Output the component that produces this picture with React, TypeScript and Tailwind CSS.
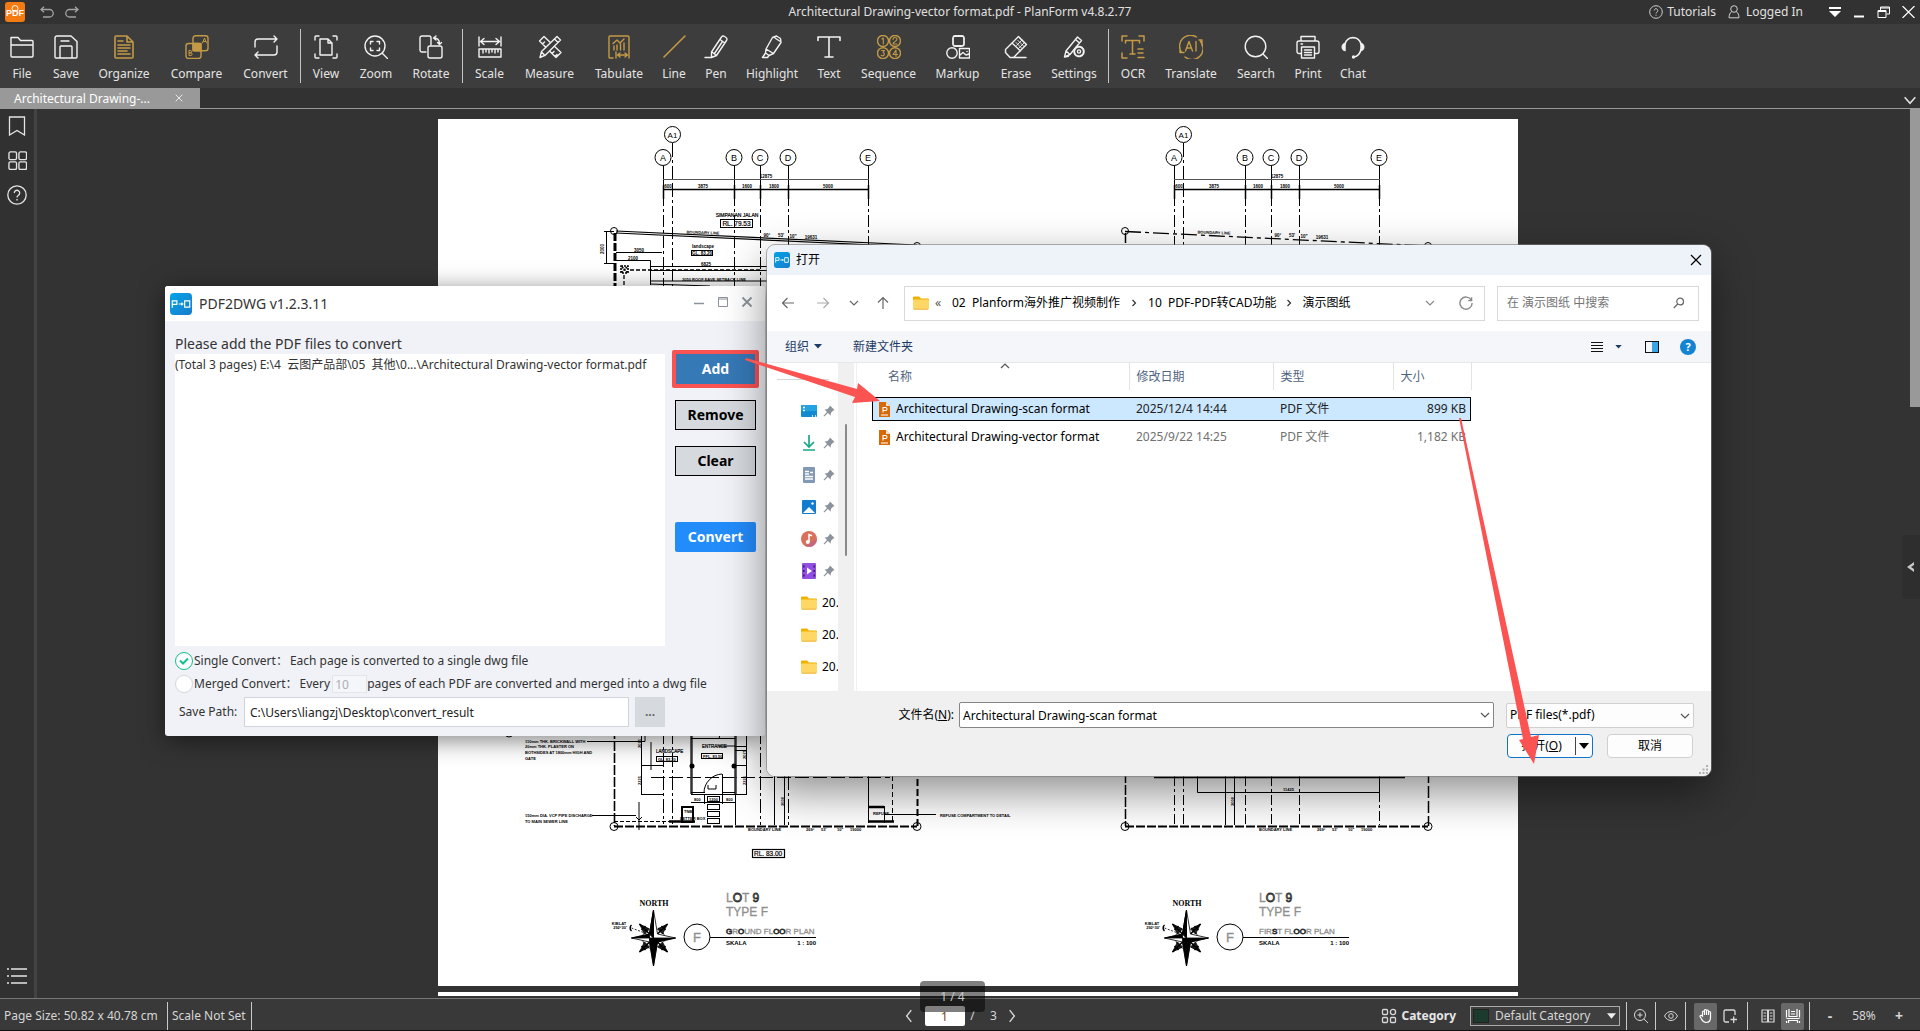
import React from "react";

type Kids = { children?: React.ReactNode };

function Icon({ children, gold = false }: Kids & { gold?: boolean }) {
  return (
    <svg
      viewBox="0 0 24 24"
      className={gold ? "size-6 text-[#c49a45]" : "size-6 text-[#f2f2f2]"}
      fill="none"
      stroke="currentColor"
      strokeWidth="1.4"
      strokeLinecap="round"
      strokeLinejoin="round"
      aria-hidden="true"
    >
      {children}
    </svg>
  );
}

type Tool = { label: string; width: string; gold?: boolean; icon: React.ReactNode };

const fileTools: Tool[] = [
  { label: "File", width: "w-11", icon: <path d="M1 21V2.5h7l2.5 3H22a1 1 0 0 1 1 1V21a1 1 0 0 1-1 1H2a1 1 0 0 1-1-1zM1 10h22" /> },
  {
    label: "Save",
    width: "w-11",
    icon: <path d="M3 1h14l6 5.5V22a1 1 0 0 1-1 1H2a1 1 0 0 1-1-1V3a2 2 0 0 1 2-2zM6 23V12a1 1 0 0 1 1-1h10a1 1 0 0 1 1 1v11M7 6h8" />,
  },
  {
    label: "Organize",
    width: "w-[72px]",
    gold: true,
    icon: <path strokeWidth="1.6" d="M4 1h11l6 6v15a1 1 0 0 1-1 1H4a1 1 0 0 1-1-1V2a1 1 0 0 1 1-1zM15 1v6h6M6 6h5M6 10h12M6 13h12M6 16h9M6 19h12" />,
  },
  {
    label: "Compare",
    width: "w-[73px]",
    gold: true,
    icon: (
      <>
        <rect x="8" y="0.8" width="15" height="15" rx="2.5" />
        <rect x="1" y="8.5" width="15" height="15" rx="2.5" />
        <rect x="8" y="8.5" width="8" height="7.3" fill="currentColor" />
        <path d="M17.5 8l2-5 2 5M18.2 6.5h2.6M4 15.500v5h1.800a1.300 1.300 0 0 0 0-2.600H4h1.500a1.200 1.200 0 0 0 0-2.400z" strokeWidth="1" />
      </>
    ),
  },
  {
    label: "Convert",
    width: "w-[65px]",
    icon: <path d="M1 12V7a3 3 0 0 1 3-3h19M20 1l3 3-3 3M23 11v6a3 3 0 0 1-3 3H1M4 17l-3 3 3 3" />,
  },
];

const viewTools: Tool[] = [
  {
    label: "View",
    width: "w-12",
    icon: <path d="M1 5V2a1 1 0 0 1 1-1h3M19 1h3a1 1 0 0 1 1 1v3M23 19v3a1 1 0 0 1-1 1h-3M5 23H2a1 1 0 0 1-1-1v-3M6 4h8l4 4v12H6zM14 4v4h4" />,
  },
  {
    label: "Zoom",
    width: "w-[52px]",
    icon: (
      <>
        <circle cx="11" cy="11" r="10" />
        <path d="M18.500 18.500L23.500 23.500M6.500 9V6.500H9M13 6.500h2.500V9M15.500 13v2.500H13M9 15.500H6.500V13" />
      </>
    ),
  },
  {
    label: "Rotate",
    width: "w-[58px]",
    icon: (
      <>
        <path d="M7 17H3a2 2 0 0 1-2-2V3a2 2 0 0 1 2-2h7a2 2 0 0 1 2 2v7M15 3c4 0 5.500 2 5.500 6M17 1l-2.500 2L17 5M18.500 7.500l2 2 2-2" />
        <rect x="9" y="11" width="14" height="12" rx="2" />
      </>
    ),
  },
];

const markupTools: Tool[] = [
  {
    label: "Scale",
    width: "w-[51px]",
    icon: <path d="M1 2v9M23 2v9M2.500 6.500h19M6 3.500l-3.500 3 3.500 3M18 3.500l3.500 3-3.500 3M1 14h22v8H1zM5 14v4M8 14v3M11 14v4M14 14v3M17 14v4M20 14v3" />,
  },
  {
    label: "Measure",
    width: "w-[69px]",
    icon: (
      <>
        <path d="M1.500 6l4.500-4.500 17 16-5 5zM4.500 9l2-2M8 12.500l2-2M14 18.500l2-2M17 21.500l2-2" />
        <path d="M19 1.500l3.500 3.500L7.500 20 2 22.500 3.500 16.500zM16.500 4l3.500 3.500M3.500 17l3.500 3.500" fill="#3d3d3d" />
      </>
    ),
  },
  {
    label: "Tabulate",
    width: "w-[70px]",
    gold: true,
    icon: <path d="M6 23H3a1 1 0 0 1-1-1V2a1 1 0 0 1 1-1h18a1 1 0 0 1 1 1v20M6 8.500l4-3.500 3 3 4-4M7 15v-4M10 15v-5M13.500 15v-6M17 15V8M9 17v6M22 17v6M10.500 20h10M13 18l-2.500 2L13 22M18 18l2.500 2-2.500 2" />,
  },
  { label: "Line", width: "w-10", gold: true, icon: <path d="M2 22L23 1" strokeWidth="1.6" /> },
  {
    label: "Pen",
    width: "w-11",
    icon: <path d="M1 22.500h6.500M7.500 22.500v-5.500L17.500 2a2 2 0 0 1 3-.5l1.500 1a2 2 0 0 1 .5 3L12.500 20.500zM16 4.500l4.800 3.500M8 17l4.500 3.500M18.500 6.500l-8 12" />,
  },
  {
    label: "Highlight",
    width: "w-[68px]",
    icon: <path d="M6 14L12.500 2.500l4-1.500 4 2.500.5 4L13.500 18.500zM6 14l-.5 4 3.500 2.500 4.500-2M5.500 18L2.500 22.500H7.500l1.500-2M15 3l4.500 3" />,
  },
  { label: "Text", width: "w-[46px]", icon: <path d="M1 5.500V2h22v3.500M12 2v20M8 22h8" strokeWidth="1.600" /> },
  {
    label: "Sequence",
    width: "w-[73px]",
    gold: true,
    icon: (
      <>
        <circle cx="6" cy="6" r="5.500" />
        <circle cx="18" cy="6" r="5.500" />
        <circle cx="6" cy="18.200" r="5.500" />
        <circle cx="18" cy="18.200" r="5.500" />
        <path d="M5 4l1.300-1v6M16 4.500a2 2 0 0 1 4 0c0 1.500-4 2.500-4 4.500h4M4.500 15.500h3L6 17.500a1.700 1.700 0 1 1-1.800 2.600M19 21.500v-6.500l-3 4.500h4.500" strokeWidth="1.100" />
      </>
    ),
  },
  {
    label: "Markup",
    width: "w-[65px]",
    icon: (
      <>
        <rect x="7" y="1" width="11" height="10" rx="2" strokeDasharray="2.200 1" strokeWidth="1.800" />
        <circle cx="6" cy="18" r="5.200" />
        <path d="M13.500 13.500h10v9.500h-10zM13.500 20.500l3.500-3 3 2.500 3-1M21 16.500h.1" />
      </>
    ),
  },
  {
    label: "Erase",
    width: "w-[52px]",
    icon: (
      <>
        <path d="M1.500 14.500L14.500 1.500 22.500 9.500 9.500 22.500H6L1.500 17.500zM8.500 8.500l8 7.500M6 22.500h16" />
        <path d="M12 7.500l6 6M14 5.500l6 6M12.500 10.500l5.500-5.500M15 13l5.500-5.500M16 3.500l5 5" strokeWidth="0.900" />
      </>
    ),
  },
  {
    label: "Settings",
    width: "w-16",
    icon: (
      <>
        <path d="M2.500 22L4 16 15.500 2l4 3.500L8 19.500zM13.500 4.500l4 3.500M4 16l4 3.500M2.500 22l4-.8" />
        <circle cx="17" cy="16.500" r="4.800" strokeWidth="2" strokeDasharray="2.600 1.200" fill="#3d3d3d" />
        <circle cx="17" cy="16.500" r="1.600" />
      </>
    ),
  },
];

const helperTools: Tool[] = [
  {
    label: "OCR",
    width: "w-[46px]",
    gold: true,
    icon: <path strokeWidth="1.500" d="M1 6V1h5M18 1h5v5M6 23H1v-5M4.500 8V5.500h14V8M11.500 5.500v13.500M9 19h5M17 14h5M17 18h5M17 22.500h6" />,
  },
  {
    label: "Translate",
    width: "w-[70px]",
    gold: true,
    icon: <path d="M2.500 17.500A11 11 0 0 1 17.500 2M21.500 6.500A11 11 0 0 1 6 22M1 13v4.500h4M23 10.500V5h-3M6.500 16L10 6.500 13.500 16M7.600 13h4.800M17 6.500V16" />,
  },
  {
    label: "Search",
    width: "w-[60px]",
    icon: (
      <>
        <circle cx="11.500" cy="11.500" r="10.300" />
        <path d="M19 19l4.500 4.500" />
      </>
    ),
  },
  {
    label: "Print",
    width: "w-11",
    icon: <path d="M5 6V1.500h14V6M5.500 18.500H3a2 2 0 0 1-2-2V8a2 2 0 0 1 2-2h18a2 2 0 0 1 2 2v8.500a2 2 0 0 1-2 2h-2.500M5.500 12h13v11h-13zM8.500 15h7M8.500 17.500h7M8.500 20h7M5 9h1.500" />,
  },
  {
    label: "Chat",
    width: "w-[46px]",
    icon: (
      <>
        <path d="M4 9a8.200 8.200 0 0 1 16 0M20 14.500c-1 4-3.500 7-7 7.500" strokeWidth="1.600" />
        <path d="M4.500 8v8C2 16 .8 14 .8 12S2 8 4.500 8zM19.500 8v8c2.500 0 3.700-2 3.700-4S22 8 19.500 8z" fill="currentColor" strokeWidth="0.500" />
        <circle cx="12.500" cy="22" r="1" fill="currentColor" />
      </>
    ),
  },
];

function ToolGroup({ tools }: { tools: Tool[] }) {
  return (
    <>
      {tools.map((t) => (
        <button key={t.label} type="button" className={`${t.width} flex shrink-0 flex-col items-center gap-[7px] pt-[11px] text-[12px] leading-4 text-[#e4e4e4]`}>
          <Icon gold={t.gold}>{t.icon}</Icon>
          <span>{t.label}</span>
        </button>
      ))}
    </>
  );
}

function ToolDivider() {
  return <span className="my-[5px] mr-px ml-[2px] w-px shrink-0 bg-[#c4c4c4]" />;
}

function TitleBar() {
  return (
    <header className="relative flex h-6 shrink-0 items-center justify-between bg-[#323232] pr-[5px] pl-[5px] text-[12px] leading-4 text-[#e0e0e0]">
      <div className="flex items-center gap-3">
        <svg viewBox="0 0 20 20" className="size-5" aria-hidden="true">
          <rect width="20" height="20" rx="3" fill="#f47a12" />
          <text x="10" y="13.500" fontSize="9" fontWeight="700" fill="#fff" textAnchor="middle" fontFamily="Liberation Sans, sans-serif">PDF</text>
          <circle cx="10" cy="6.500" r="3" fill="none" stroke="#fff" strokeWidth="0.900" />
        </svg>
        <button type="button" aria-label="Undo" className="ml-[3px]">
          <svg viewBox="0 0 14 12" className="h-3 w-[14px] fill-none stroke-[#a2a2a2]" strokeWidth="1.300">
            <path d="M4 .8L1 3.500l3 2.700M1 3.500h8.500a3.700 3.700 0 0 1 0 7.500H3" />
          </svg>
        </button>
        <button type="button" aria-label="Redo" className="-ml-px">
          <svg viewBox="0 0 14 12" className="h-3 w-[14px] fill-none stroke-[#a2a2a2]" strokeWidth="1.300">
            <path d="M10 .8l3 2.700-3 2.700M13 3.500H4.500a3.700 3.700 0 0 0 0 7.500H11" />
          </svg>
        </button>
      </div>
      <h1 className="absolute inset-x-0 mx-auto w-fit">Architectural Drawing-vector format.pdf - PlanForm v4.8.2.77</h1>
      <div className="flex items-center">
        <a href="#tutorials" className="flex items-center gap-1">
          <svg viewBox="0 0 14 14" className="size-[14px] fill-none stroke-[#cfcfcf]">
            <circle cx="7" cy="7" r="6.300" />
            <path d="M5.200 5.500a1.800 1.800 0 1 1 2.800 1.500c-.7.500-1 .8-1 1.500M7 9.800v1" />
          </svg>
          Tutorials
        </a>
        <a href="#account" className="mr-[26px] ml-3 flex items-center gap-[6px]">
          <svg viewBox="0 0 12 14" className="h-[14px] w-3 fill-none stroke-[#cfcfcf]">
            <circle cx="6" cy="4" r="3.300" />
            <path d="M3.800 6.600C2 7.500 1 10 1 12.800h10c0-2.800-1-5.300-2.800-6.200" />
          </svg>
          Logged In
        </a>
        <div className="flex items-center gap-3">
          <button type="button" aria-label="Menu">
            <svg viewBox="0 0 12 12" className="size-3 fill-white"><path d="M0 1h12v2H0zM0 5h12l-6 6z" /></svg>
          </button>
          <button type="button" aria-label="Minimize">
            <svg viewBox="0 0 12 12" className="size-3 fill-white"><path d="M1 9.500h10v2H1z" /></svg>
          </button>
          <button type="button" aria-label="Restore">
            <svg viewBox="0 0 13 12" className="h-3 w-[13px] fill-none stroke-white"><path d="M1 4.500h8v7H1zM3.500 4V1h9v7H9.500M1 5.500h8M3.500 2h9" /></svg>
          </button>
          <button type="button" aria-label="Close">
            <svg viewBox="0 0 13 12" className="h-3 w-[13px] fill-none stroke-white" strokeWidth="1.200"><path d="M.5 0l12 12M12.500 0L.5 12" /></svg>
          </button>
        </div>
      </div>
    </header>
  );
}

const axes = [
  { n: "A", x: 225 },
  { n: "B", x: 296 },
  { n: "C", x: 322 },
  { n: "D", x: 350 },
  { n: "E", x: 430 },
];

function PlanTop() {
  return (
    <g>
      <g fill="none" stroke="#000" strokeWidth="1">
        <circle cx="234.500" cy="15.500" r="8" />
        {axes.map((a) => (
          <g key={a.n}>
            <circle cx={a.x} cy="38.500" r="8" />
            <path d={`M${a.x + 0.5} 47V75`} />
            <path d={`M${a.x + 0.5} 75V590`} strokeDasharray="12 3 3 3" />
            <path d={`M${a.x + 0.5} 66v14`} strokeWidth="1.500" />
          </g>
        ))}
        <path d="M234.500 24V78" strokeDasharray="14 3 3 3" />
        <path d="M234.500 66V590" strokeDasharray="12 3 3 3" />
        <path d="M225 60.500h206" stroke="#555" />
        <path d="M225 70.500h206" strokeWidth="1.300" />
        <circle cx="176" cy="112" r="3.500" />
        <circle cx="479" cy="127" r="3.500" />
      </g>
      <g fontSize="9" textAnchor="middle">
        <text x="234.500" y="18.500" fontSize="8">A1</text>
        {axes.map((a) => (
          <text key={a.n} x={a.x} y="41.500">{a.n}</text>
        ))}
      </g>
      <g fontSize="4.500" fontWeight="700" textAnchor="middle">
        <text x="328" y="59">12875</text>
        <text x="230" y="69">600</text>
        <text x="265" y="69">3875</text>
        <text x="309" y="69">1600</text>
        <text x="336" y="69">1800</text>
        <text x="390" y="69">5000</text>
        <text x="265" y="115" fontSize="4" transform="rotate(2 265 115)">BOUNDARY LINE</text>
        <text x="329" y="118">90°</text>
        <text x="343" y="118">53'</text>
        <text x="355" y="119">10"</text>
        <text x="373" y="120">19631</text>
      </g>
    </g>
  );
}

function Compass() {
  return (
    <g>
      <text x="216" y="787" fontSize="8" fontWeight="700" textAnchor="middle" fontFamily="Liberation Serif, serif">NORTH</text>
      <g transform="translate(215.500 819)" stroke="#000" strokeWidth="0.800">
        <path d="M0-13L13-13 6-6 13 13 0 6-13 13-6 0-13-13z" fill="#fff" stroke="none" />
        <path d="M-14-14L-9-4-4-9zM14-14L9-4 4-9zM-14 14l5-10 5 5zM14 14L9 4 4 9z" fill="#222" />
        <path d="M-14-14L14 14M14-14L-14 14M-12-8L-8-12M12-8L8-12M-12 8l4 4M12 8l-4 4" fill="none" strokeWidth="1.600" />
        <circle r="11" fill="none" strokeDasharray="4 3" />
        <path d="M0-28L4-4 22 0 4 4 0 28-4 4-22 0-4-4z" fill="#fff" />
        <path d="M0-28V0L-4-4zM22 0H0L4 4zM0 28V0L4 4zM-22 0H0L-4-4zM0-28V28L-4 4V-4z" fill="#000" />
        <path d="M-22-10L-6-4" fill="none" strokeDasharray="2 1.500" />
        <path d="M-22-13a4 4 0 0 0 0 6" fill="none" strokeWidth="1.500" />
      </g>
      <text x="181" y="806" fontSize="4" fontWeight="700" textAnchor="middle">KIBLAT</text>
      <text x="182" y="810" fontSize="4" fontWeight="700" textAnchor="middle">292°30'</text>
    </g>
  );
}

function Dark({ children }: Kids) {
  return <tspan fill="#888" stroke="#333" strokeWidth="0.800">{children}</tspan>;
}

function PlanCaption({ children }: Kids) {
  return (
    <g>
      <Compass />
      <circle cx="259" cy="818" r="13" fill="none" stroke="#000" />
      <g fill="#8f8f8f" stroke="#8f8f8f" strokeWidth="0.300">
        <text x="259" y="823" fontSize="13" textAnchor="middle">F</text>
        <text x="288" y="783" fontSize="12">L<Dark>O</Dark>T <Dark>9</Dark></text>
        <text x="288" y="797" fontSize="12">TYPE F</text>
        <text x="288" y="815" fontSize="8">{children}</text>
      </g>
      <path d="M272 818.500H378" stroke="#000" />
      <g fontSize="6" fontWeight="700">
        <text x="288" y="826">SKALA</text>
        <text x="378" y="826" textAnchor="end">{"1 :  100"}</text>
      </g>
    </g>
  );
}

function Drawing() {
  return (
    <svg viewBox="0 0 1080 867" className="block w-full bg-white" fontFamily="Liberation Sans Narrow, Liberation Sans, sans-serif" role="img" aria-label="Floor plans">
      <PlanTop />
      <g transform="translate(511 0)">
        <PlanTop />
        <path d="M176 112.500L479 127" stroke="#000" strokeWidth="1.300" strokeDasharray="16 4 4 4" />
        <path d="M176.500 114V707" stroke="#000" strokeWidth="1.500" strokeDasharray="10 2" />
        <path d="M479.500 127V707" stroke="#000" strokeWidth="1.500" strokeDasharray="12 3" />
      </g>

      <g fill="none" stroke="#000">
        <path d="M178 112L479 126M178 114l301 14" strokeWidth="1.200" />
        <path d="M177 114V490" strokeWidth="3" strokeDasharray="8 2" />
        <path d="M176.500 490V707" strokeWidth="1.600" strokeDasharray="10 2" />
        <path d="M168.500 112v32M166 112.500h10M166 144.500h10M178 133.500h46M178 141.500h34.500V166M212 147.500h120M212 151.500h120" />
        <path d="M192 151h130M186 156v12" strokeDasharray="4 2" strokeWidth="1.300" />
        <path d="M183 147h7v7h-7zM184 148l5 5M189 148l-5 5" strokeDasharray="2 1" strokeWidth="1.600" />
        <path d="M212 165l60 2M212 162h120" />
        <rect x="282.500" y="100.500" width="32" height="8" />
        <rect x="253.500" y="131.500" width="21" height="5" />
      </g>
      <g fontSize="6.500" textAnchor="middle" stroke="#000" strokeWidth="0.200">
        <text x="299" y="98" fontSize="5">SIMPANAN JALAN</text>
        <text x="298.500" y="107">RL. 79.53</text>
      </g>
      <g fontSize="4.500" fontWeight="700" textAnchor="middle">
        <text x="265" y="129">landscape</text>
        <text x="264" y="136">GL. 83.20</text>
        <text x="201" y="133">3050</text>
        <text x="195" y="141">2100</text>
        <text x="268" y="147">6825</text>
        <text x="276" y="162" fontSize="4">3050 ROOF EAVE SETBACK LINE</text>
        <text x="166" y="130" transform="rotate(-90 166 130)">2000</text>
      </g>

      <g fill="none" stroke="#000" strokeWidth="1">
        <path d="M479.500 660V707" strokeWidth="2" strokeDasharray="7 3" />
        <path d="M176 707.500H479" strokeWidth="2" strokeDasharray="9 2" />
        <path d="M176 702.500H255" strokeWidth="1" strokeDasharray="4 2" />
        <circle cx="176" cy="707.500" r="4" />
        <circle cx="479" cy="707.500" r="4" />
        <path d="M149 622.500h58V611M154 696.500h44" />
        <path d="M203.500 611v65M203 646.500h22M203 675.500h22M213 623v28M201 683v28M198 698l3 3 3-3" />
        <path d="M225.500 611V705M234.500 611V705" strokeDasharray="14 3 3 3" />
        <path d="M213 658.500H452" strokeDasharray="14 4" />
        <path d="M253.500 611V675M297.500 611V675" strokeWidth="2.500" stroke="#333" />
        <path d="M253 619.500h44M253 673.500h14M284 673.500h13M253 675.500h56M253 683.500h44M297 646.500h12" />
        <path d="M284.500 655v20M284 655a19 19 0 0 0-18 19M266.500 675v10M284.500 675v10" />
        <path d="M270 666v4h8v-4M297.500 675V706" />
        <rect x="269.500" y="677.500" width="12" height="5" />
        <rect x="269.500" y="685.500" width="12" height="5" />
        <rect x="269.500" y="692.500" width="12" height="5" />
        <rect x="269.500" y="699.500" width="12" height="5" />
        <path d="M297 627.500h12M297 631.500h12M308.500 611V675M281 620a9 9 0 0 1 9-9M281 627h16" />
        <path d="M297.500 675V706M322.500 611V706M350.500 657V706" strokeDasharray="14 3 3 3" />
        <path d="M336.500 657V706M346.500 657V706M430.500 657V704M446.500 687V704" />
        <path d="M454.500 657V704" strokeDasharray="5 3" />
        <path d="M430 702.500h26M430 688h16M231 702.500h26" strokeWidth="2.500" />
        <path d="M447 695.500h51" />
        <path d="M244 688h11v15h-11z" strokeWidth="2" />
        <rect x="218.500" y="637.500" width="21" height="5" />
        <rect x="263.500" y="634.500" width="21" height="5" />
        <rect x="314.500" y="730.500" width="32" height="8" strokeWidth="1.200" />
        <circle cx="71" cy="614" r="4" />
      </g>
      <circle cx="254" cy="647" r="2.500" />
      <circle cx="296" cy="647" r="2.500" />
      <g fontSize="4" fontWeight="700">
        <text x="87" y="624">110mm THK. BRICKWALL WITH</text>
        <text x="87" y="629">20mm THK. PLASTER ON</text>
        <text x="87" y="635">BOTHSIDES AT 1800mm HIGH AND</text>
        <text x="87" y="641">GATE</text>
        <text x="87" y="698">150mm DIA. VCP PIPE DISCHARGE</text>
        <text x="87" y="704">TO MAIN SEWER LINE</text>
        <text x="502" y="698">REFUSE COMPARTMENT TO DETAIL</text>
        <text x="435" y="696">REFUSE</text>
        <text x="246" y="694">TNB</text>
        <text x="242" y="701">LETTER BOX</text>
        <text x="310" y="712">BOUNDARY LINE</text>
        <text x="368" y="712">269°</text>
        <text x="383" y="712">53'</text>
        <text x="399" y="712">10"</text>
        <text x="412" y="712">19000</text>
        <text x="256" y="682">800</text>
        <text x="271" y="682">1200</text>
        <text x="288" y="682">800</text>
        <text x="220" y="642">GL. 83.20</text>
        <text x="265" y="639">FFL. 83.50</text>
        <text x="203" y="629" transform="rotate(-90 203 629)">2075</text>
        <text x="203" y="666" transform="rotate(-90 203 666)">2225</text>
        <text x="308" y="640" transform="rotate(-90 308 640)">2075</text>
        <text x="308" y="666" transform="rotate(-90 308 666)">2225</text>
        <text x="346" y="687" transform="rotate(-90 346 687)">3000</text>
      </g>
      <g fontSize="6.500" stroke="#000" strokeWidth="0.200">
        <text x="218" y="634" fontSize="4.500">LANDSCAPE</text>
        <text x="264" y="629" fontSize="4.500">ENTRANCE</text>
        <text x="316" y="737">RL. 83.00</text>
      </g>

      <g fill="none" stroke="#000">
        <path d="M716 658.500H967" strokeWidth="1.500" />
        <path d="M687 707.500H990" strokeWidth="2" strokeDasharray="9 2" />
        <circle cx="687" cy="707.500" r="4" />
        <circle cx="990" cy="707.500" r="4" />
        <path d="M759.500 657V673.500H941.500V657M787.500 657V706M796.500 657V706" />
        <path d="M736.500 657V706M745.500 657V706M807.500 657V706M833.500 657V706M861.500 657V706M941.500 673V706" strokeDasharray="10 3 3 3" />
      </g>
      <g fontSize="4" fontWeight="700">
        <text x="845" y="672">11425</text>
        <text x="796" y="687" transform="rotate(-90 796 687)">3000</text>
        <text x="821" y="712">BOUNDARY LINE</text>
        <text x="879" y="712">269°</text>
        <text x="894" y="712">53'</text>
        <text x="910" y="712">10"</text>
        <text x="923" y="712">19000</text>
      </g>

      <PlanCaption><Dark>G</Dark>R<Dark>O</Dark>UND FL<Dark>OO</Dark>R PLAN</PlanCaption>
      <g transform="translate(533 0)">
        <PlanCaption>FIR<Dark>S</Dark>T FL<Dark>OO</Dark>R PLAN</PlanCaption>
      </g>
    </svg>
  );
}

function AppLogo({ className }: { className: string }) {
  return (
    <svg viewBox="0 0 24 24" className={className} aria-hidden="true">
      <defs>
        <linearGradient id="logo" x1="0" y1="0" x2="1" y2="1">
          <stop offset="0" stopColor="#00a4e8" />
          <stop offset="1" stopColor="#1b7ccb" />
        </linearGradient>
      </defs>
      <rect width="24" height="24" rx="4" fill="url(#logo)" />
      <path d="M2.500 16V8.500h5v4h-5M9.500 12h4.500M12.500 10.500L14 12l-1.500 1.500M16 8.500h5.500v7H16z" fill="none" stroke="#fff" strokeWidth="1.300" />
    </svg>
  );
}

function RadioTick({ id, checked, children }: Kids & { id: string; checked?: boolean }) {
  return (
    <span className="flex items-center">
      <span className="relative mr-px grid size-[18px] place-items-center">
        <input
          id={id}
          type="radio"
          name="mode"
          defaultChecked={checked}
          className="size-[18px] appearance-none rounded-full border border-[#d4d7dd] bg-white checked:border-[#12c08a]"
        />
        {checked && (
          <svg viewBox="0 0 12 12" className="pointer-events-none absolute size-3 fill-none stroke-[#12c08a]" strokeWidth="2">
            <path d="M2 5.500l3 3 5-5" />
          </svg>
        )}
      </span>
      <label htmlFor={id}>{children}</label>
    </span>
  );
}

function ConvertWindow() {
  const sideButton = "h-[30px] border border-black bg-[#d6dade] text-[14px] font-bold text-black";
  return (
    <section className="absolute top-[286px] left-[165px] flex h-[450px] w-[600px] flex-col rounded-[3px] bg-[#f0f2f7] text-[12px] leading-4 text-[#333] shadow-[0_4px_24px_rgba(0,0,0,0.5)]">
      <header className="flex h-[35px] shrink-0 items-center rounded-t-[3px] bg-white pr-3 pl-[5px]">
        <AppLogo className="size-[22px]" />
        <h2 className="ml-[7px] grow pt-px text-[14px]">PDF2DWG v1.2.3.11</h2>
        <div className="flex items-center gap-3 pb-1 text-[#8d939b]">
          <button type="button" aria-label="Minimize"><svg viewBox="0 0 12 12" className="size-3 fill-none stroke-current" strokeWidth="1.500"><path d="M1 7.500h10" /></svg></button>
          <button type="button" aria-label="Maximize"><svg viewBox="0 0 12 12" className="size-3 fill-none stroke-current"><path d="M1.500 1.500h9v9h-9zM1.500 3h9" /></svg></button>
          <button type="button" aria-label="Close"><svg viewBox="0 0 12 12" className="size-3 fill-none stroke-current" strokeWidth="1.800"><path d="M1.500 1.500l9 9M10.500 1.500l-9 9" /></svg></button>
        </div>
      </header>
      <div className="flex grow gap-[7px] pt-[13px] pr-[6px] pb-[9px] pl-[10px]">
        <div className="flex w-[490px] flex-col">
          <p className="text-[14px] leading-5">Please add the PDF files to convert</p>
          <ul className="h-[292px] bg-white pt-[3px]">
            <li className="whitespace-pre">{"(Total 3 pages) E:\\4  云图产品部\\05  其他\\0...\\Architectural Drawing-vector format.pdf"}</li>
          </ul>
          <div className="mt-1 flex flex-col gap-px whitespace-nowrap">
            <div className="flex h-[22px] items-center">
              <RadioTick id="single" checked>Single Convert：<span className="pl-[2px]">Each page is converted to a single dwg file</span></RadioTick>
            </div>
            <div className="flex h-[22px] items-center">
              <RadioTick id="merged">Merged Convert：<span className="pl-[2px]">Every</span></RadioTick>
              <input aria-label="Pages per file" defaultValue="10" className="ml-[2px] h-[18px] w-[35px] border border-[#e3e5ea] bg-[#f5f6f9] px-[2px] text-[#a9afb8]" />
              <span>pages of each PDF are converted and merged into a dwg file</span>
            </div>
          </div>
          <div className="mt-[2px] flex items-center">
            <label htmlFor="path" className="w-[69px] pl-1 whitespace-nowrap">Save Path:</label>
            <input id="path" defaultValue="C:\Users\liangzj\Desktop\convert_result" className="h-[30px] min-w-0 grow border border-[#d0d3d9] bg-white px-[5px] text-[#222]" />
            <button type="button" className="ml-[6px] h-[30px] w-[30px] bg-[#d6dade] font-bold text-[#666]">...</button>
          </div>
        </div>
        <div className="flex w-[87px] flex-col pt-4">
          <button type="button" className="h-[38px] rounded-[2px] border-4 border-[#fb5252] bg-[#3579b7] text-[14px] font-bold text-white">Add</button>
          <div className="mt-3 flex flex-col gap-4 px-[3px]">
            <button type="button" className={sideButton}>Remove</button>
            <button type="button" className={sideButton}>Clear</button>
            <button type="button" className="mt-[30px] h-[30px] rounded-[2px] bg-[#238cfb] text-[14px] font-bold text-white">Convert</button>
          </div>
        </div>
      </div>
    </section>
  );
}

function Folder() {
  return (
    <svg viewBox="0 0 16 14" className="h-[14px] w-4 shrink-0" aria-hidden="true">
      <path d="M0 1.500A1 1 0 0 1 1 .5h5l2 2h7a1 1 0 0 1 1 1V8H0z" fill="#f0b000" />
      <rect y="3.500" width="16" height="10" rx="1" fill="#ffd766" />
      <path d="M1 13.200h14" stroke="#e7a62c" strokeWidth="0.800" />
    </svg>
  );
}

function Pin() {
  return (
    <svg viewBox="0 0 12 12" className="size-3 fill-[#8b949c]" aria-hidden="true">
      <path d="M7 .5L11.500 5 10 5.700 8 7.800 7.500 10.500 5 8 1.200 11.500.5 10.800 4 7 1.700 4.500l2.800-.5L6.300 2z" />
    </svg>
  );
}

function Chevron({ className, d }: { className: string; d: string }) {
  return (
    <svg viewBox="0 0 12 12" className={className} fill="none" stroke="currentColor" strokeWidth="1.200" aria-hidden="true">
      <path d={d} />
    </svg>
  );
}

const DOWN = "M2 4l4 4 4-4";

const places: { name: string; icon: React.ReactNode }[] = [
  { name: "Desktop", icon: <><rect y="2" width="16" height="12" rx="1" fill="#1289d0" /><rect y="2" width="16" height="6" rx="1" fill="#25a3e0" /><path d="M2 4.500h2M2 7.500h2M11 13h1M14 13h1" stroke="#fff" strokeWidth="1.300" /></> },
  { name: "Downloads", icon: <path d="M8 0v12M3 7l5 5 5-5M2 15h12" fill="none" stroke="#1aa886" strokeWidth="1.700" /> },
  { name: "Documents", icon: <><rect x="2" width="12" height="16" rx="1" fill="#8299b5" /><path d="M4 4.500h4M4 7h4M4 9.500h8M4 12h8M9 5.500h3" stroke="#fff" strokeWidth="1.300" /></> },
  { name: "Pictures", icon: <><rect x="1" y="1" width="14" height="14" rx="1" fill="#127cd0" /><path d="M2 14l6-6 6 6z" fill="#fff" /><circle cx="11.500" cy="4.500" r="1.200" fill="#fff" /></> },
  { name: "Music", icon: <><circle cx="8" cy="8" r="8" fill="#d9705c" /><path d="M16 8a8 8 0 0 1-12 7z" fill="#b0609a" opacity=".5" /><path d="M8 11V3.500l3 1.200" fill="none" stroke="#fff" strokeWidth="1.500" /><circle cx="6.800" cy="11" r="2" fill="#fff" /></> },
  { name: "Videos", icon: <><rect x="1" width="14" height="16" rx="1" fill="#9250e0" /><path d="M2.800 2.500v12M13.200 2.500v12" stroke="#3d1c78" strokeWidth="1.600" strokeDasharray="2 2.500" /><path d="M6 4.500v7l5-3.500z" fill="#fff" /></> },
];

const files = [
  { name: "Architectural Drawing-scan format", date: "2025/12/4 14:44", size: "899 KB", selected: true },
  { name: "Architectural Drawing-vector format", date: "2025/9/22 14:25", size: "1,182 KB", selected: false },
];

function OpenDialog() {
  return (
    <section className="absolute top-[245px] left-[767px] flex h-[531px] w-[944px] flex-col overflow-hidden rounded-lg bg-white text-[12px] leading-4 text-black outline outline-1 outline-[#7a7a7a]/60">
      <header className="flex h-[30px] shrink-0 items-center bg-[#eef3f9] px-[7px]">
        <AppLogo className="size-4" />
        <h2 className="ml-[6px] grow">打开</h2>
        <button type="button" aria-label="关闭" className="mr-[2px]"><Chevron className="size-3" d="M1 1l10 10M11 1L1 11" /></button>
      </header>

      <div className="flex h-14 shrink-0 items-center pr-3 pl-[14px]">
        <div className="flex w-[123px] items-center text-[#666]">
          <button type="button" aria-label="后退" className="w-[35px]"><svg viewBox="0 0 14 14" className="size-[14px] fill-none stroke-current" strokeWidth="1.200"><path d="M13 7H1.500M6.500 2l-5 5 5 5" /></svg></button>
          <button type="button" aria-label="前进" className="w-8 text-[#aaa]"><svg viewBox="0 0 14 14" className="size-[14px] fill-none stroke-current" strokeWidth="1.200"><path d="M1 7h11.500M7.500 2l5 5-5 5" /></svg></button>
          <button type="button" aria-label="最近" className="w-7"><Chevron className="size-3" d={DOWN} /></button>
          <button type="button" aria-label="上移"><svg viewBox="0 0 14 14" className="size-[14px] fill-none stroke-current" strokeWidth="1.200"><path d="M7 13V1.500M2 6.500l5-5 5 5" /></svg></button>
        </div>
        <nav className="flex h-[35px] w-[581px] items-center border border-[#d9d9d9] pr-[11px] pl-2 whitespace-pre">
          <Folder />
          <span className="ml-[6px] w-[17px] text-[#555]">«</span>
          <button type="button">{"02  Planform海外推广视频制作"}</button>
          <Chevron className="mx-2 size-3 text-[#333]" d="M4.500 3l3 3-3 3" />
          <button type="button">{"10  PDF-PDF转CAD功能"}</button>
          <Chevron className="mx-[7px] size-3 text-[#333]" d="M4.500 3l3 3-3 3" />
          <button type="button" className="grow text-left">演示图纸</button>
          <button type="button" aria-label="展开" className="mr-[23px] text-[#888]"><Chevron className="size-3" d={DOWN} /></button>
          <button type="button" aria-label="刷新" className="text-[#888]"><Chevron className="size-[14px]" d="M10.500 3.500A5.200 5.200 0 1 0 11.200 6M10.800 1v3H8" /></button>
        </nav>
        <div className="ml-3 flex h-[35px] w-[202px] items-center border border-[#d9d9d9] pr-[14px] pl-[9px]">
          <input aria-label="搜索" placeholder="在 演示图纸 中搜索" className="min-w-0 grow outline-none placeholder:text-[#757575]" />
          <svg viewBox="0 0 12 12" className="size-3 fill-none stroke-[#666]" strokeWidth="1.300"><circle cx="7.500" cy="4.500" r="3.500" /><path d="M5 7L.8 11.200" /></svg>
        </div>
      </div>

      <div className="flex h-8 shrink-0 items-center border-b border-[#e6e8eb] bg-[#f4f6f9] pr-[15px] pl-[18px] text-[#1e3a66]">
        <button type="button" className="flex items-center gap-[5px]">组织<svg viewBox="0 0 8 5" className="h-[5px] w-2 fill-current"><path d="M0 0h8L4 4.500z" /></svg></button>
        <button type="button" className="ml-[31px]">新建文件夹</button>
        <div className="ml-auto flex items-center">
          <button type="button" aria-label="视图"><svg viewBox="0 0 12 12" className="size-3 stroke-[#111]"><path d="M0 1.500h12M0 4.500h12M0 7.500h12M0 10.500h12" /></svg></button>
          <button type="button" aria-label="更多视图" className="ml-3"><svg viewBox="0 0 8 5" className="h-1 w-[7px] fill-current"><path d="M0 0h8L4 4.500z" /></svg></button>
          <button type="button" aria-label="预览窗格" className="ml-[23px]"><svg viewBox="0 0 14 12" className="h-3 w-[14px]"><rect x="7" width="7" height="12" fill="#3aa5e6" /><rect x=".5" y=".5" width="13" height="11" fill="none" stroke="#111" /></svg></button>
          <button type="button" aria-label="帮助" className="ml-[21px] grid size-4 place-items-center rounded-full bg-[#1484d2] text-[11px] font-bold text-white">?</button>
        </div>
      </div>

      <div className="flex min-h-0 grow">
        <aside className="flex w-[71px] shrink-0 flex-col overflow-hidden">
          <span className="mt-4 ml-[10px] h-px w-[52px] shrink-0 bg-[#d5d5d5]" />
          <ul className="mt-[15px] pl-[34px]">
            {places.map((p) => (
              <li key={p.name} className="h-8">
                <button type="button" aria-label={p.name} className="flex h-8 items-center gap-[6px]">
                  <svg viewBox="0 0 16 16" className="size-4">{p.icon}</svg>
                  <Pin />
                </button>
              </li>
            ))}
            {["a", "b", "c"].map((k) => (
              <li key={k} className="h-8">
                <button type="button" className="flex h-8 items-center gap-[5px]"><Folder />20.</button>
              </li>
            ))}
          </ul>
        </aside>
        <div className="flex w-4 shrink-0 justify-center bg-[#f0f0f0] pt-[61px]">
          <span className="h-[132px] w-[2px] rounded bg-[#8a8a8a]" />
        </div>
        <div className="ml-[2px] grow border-l border-[#f0f0f0] pl-[15px]">
          <table className="w-[599px] table-fixed border-collapse text-left">
            <colgroup>
              <col className="w-[257px]" />
              <col className="w-36" />
              <col className="w-[120px]" />
              <col className="w-[78px]" />
            </colgroup>
            <thead className="text-[#4f6480]">
              <tr className="h-[27px]">
                <th className="relative border-r border-[#e3e3e3] pl-4 font-normal">
                  名称
                  <Chevron className="absolute top-[-3px] left-[127px] size-3 text-[#555]" d="M2 8l4-4 4 4" />
                </th>
                <th className="border-r border-[#e3e3e3] pl-[7px] font-normal">修改日期</th>
                <th className="border-r border-[#e3e3e3] pl-[7px] font-normal">类型</th>
                <th className="border-r border-[#e3e3e3] pl-[7px] font-normal">大小</th>
              </tr>
            </thead>
            <tbody>
              <tr className="h-[7px]" aria-hidden="true"><td colSpan={4} /></tr>
              {files.map((f) => (
                <tr key={f.name} className={f.selected ? "h-6 bg-[#cce8ff] text-[#222] outline outline-1 -outline-offset-1 outline-black" : "h-8 text-[#707070]"}>
                  <td className="text-black">
                    <span className="flex items-center gap-[6px] pl-[7px] whitespace-nowrap">
                      <svg viewBox="0 0 11 15" className="h-[15px] w-[11px]" aria-hidden="true">
                        <path d="M0 0h7l4 4v11H0z" fill="#d66a08" />
                        <path d="M7 0l4 4H7z" fill="#fff" opacity=".8" />
                        <path d="M4 10.500V5.500h2.500a1.500 1.500 0 0 1 0 3H4M2 13h7" fill="none" stroke="#fff" strokeWidth="1.100" />
                      </svg>
                      {f.name}
                    </span>
                  </td>
                  <td className="pl-[7px]">{f.date}</td>
                  <td className="pl-[7px]">PDF 文件</td>
                  <td className="pr-[5px] text-right">{f.size}</td>
                </tr>
              ))}
            </tbody>
          </table>
        </div>
      </div>

      <footer className="relative flex h-[85px] shrink-0 flex-col gap-[6px] bg-[#f0f0f0] pt-[11px] pr-[17px]">
        <div className="flex items-center justify-end">
          <label htmlFor="fname" className="mr-[5px]">文件名(<u>N</u>):</label>
          <div className="relative w-[535px]">
            <input id="fname" defaultValue="Architectural Drawing-scan format" className="h-[26px] w-full rounded-[2px] border border-[#868686] bg-white px-[3px]" />
            <Chevron className="absolute top-[7px] right-[3px] size-3 text-[#555]" d={DOWN} />
          </div>
          <div className="relative ml-3 w-[188px]">
            <select aria-label="文件类型" className="h-[25px] w-full appearance-none rounded-[2px] border border-[#d0d0d0] bg-[#fdfdfd] px-[3px]">
              <option>PDF files(*.pdf)</option>
            </select>
            <Chevron className="pointer-events-none absolute top-[7px] right-[3px] size-3 text-[#555]" d={DOWN} />
          </div>
        </div>
        <div className="flex justify-end gap-[14px] pr-px">
          <div className="flex h-6 w-[86px] items-center rounded border border-[#0f74c9] bg-[#fdfdfd]">
            <button type="button" className="grow text-center">打开(<u>O</u>)</button>
            <button type="button" aria-label="打开选项" className="flex h-[18px] w-[17px] items-center justify-center border-l border-[#444]">
              <svg viewBox="0 0 10 6" className="h-[6px] w-[10px]"><path d="M0 0h10L5 6z" /></svg>
            </button>
          </div>
          <button type="button" className="h-6 w-[86px] rounded border border-[#d0d0d0] bg-[#fdfdfd]">取消</button>
        </div>
        <svg viewBox="0 0 9 9" className="absolute right-[3px] bottom-[2px] size-[9px] fill-[#b0b0b0]" aria-hidden="true">
          <path d="M7 0h2v2H7zM7 3.500h2v2H7zM7 7h2v2H7zM3.500 3.500h2v2h-2zM3.500 7h2v2h-2zM0 7h2v2H0z" />
        </svg>
      </footer>
    </section>
  );
}

function GuideArrows() {
  return (
    <svg viewBox="0 0 1920 1031" className="pointer-events-none absolute top-0 left-0 h-[1031px] w-[1920px] fill-[#fb5252]" aria-hidden="true">
      <path d="M746 358L857 389 858 383 880 401 852 403 855 397 745 360z" />
      <path d="M1461 418L1531 737 1539 735 1534 764 1519 740 1523 739 1459 418z" />
    </svg>
  );
}

function StatusDivider() {
  return <span className="w-px shrink-0 self-stretch bg-[#c9c9c9]" />;
}

function StatusBar() {
  const ico = "size-4 fill-none stroke-[#d8d8d8]";
  return (
    <footer className="flex h-[33px] shrink-0 items-center border-t border-b border-t-[#777] border-b-[#111] bg-[#393939] pt-[3px] text-[12px] leading-4 text-[#d6d6d6]">
      <div className="flex flex-1 items-center self-stretch whitespace-nowrap">
        <span className="w-[167px] pl-1">Page Size: 50.82 x 40.78 cm</span>
        <StatusDivider />
        <span className="w-[83px] pl-1">Scale Not Set</span>
        <StatusDivider />
      </div>
      <div className="flex items-center">
        <button type="button" aria-label="Previous page"><Chevron className="size-[14px]" d="M8 1L4 6l4 5" /></button>
        <input aria-label="Page number" defaultValue="1" className="ml-[9px] h-5 w-10 rounded-[2px] bg-white text-center text-[#7a4212]" />
        <span className="w-4 text-center">/</span>
        <span className="w-[26px] text-center">3</span>
        <button type="button" aria-label="Next page" className="-ml-[2px]"><Chevron className="size-[14px]" d="M4 1l4 5-4 5" /></button>
      </div>
      <div className="flex flex-1 items-center justify-end self-stretch">
        <label htmlFor="category" className="flex items-center gap-1 font-bold text-[#e6e6e6]">
          <svg viewBox="0 0 16 16" className={ico} strokeWidth="1.300"><rect x="1.500" y="1.500" width="5" height="5" rx="1" /><circle cx="12" cy="4" r="2.600" /><rect x="1.500" y="9.500" width="5" height="5" rx="1" /><rect x="9.500" y="9.500" width="5" height="5" rx="1" /></svg>
          Category
        </label>
        <span className="relative ml-[14px] flex w-[150px] items-center">
          <select id="category" className="h-5 w-full appearance-none border border-[#aaa] bg-[#3f3f3f] pl-6 text-[12px] leading-4 text-[#d6d6d6]">
            <option>Default Category</option>
          </select>
          <span className="pointer-events-none absolute left-[3px] h-[14px] w-4 border border-[#222] bg-[#1c3a2e]" />
          <svg viewBox="0 0 10 6" className="pointer-events-none absolute right-1 h-[6px] w-[9px] fill-[#eee]"><path d="M0 0h10L5 6z" /></svg>
        </span>
        <span className="w-[6px]" />
        <StatusDivider />
        <button type="button" aria-label="Zoom area" className="flex w-7 justify-center"><svg viewBox="0 0 16 16" className={ico}><circle cx="7" cy="7" r="5.500" /><path d="M11 11l4 4M4.500 7h5M7 4.500v5" /></svg></button>
        <StatusDivider />
        <button type="button" aria-label="Show" className="flex w-[29px] justify-center"><svg viewBox="0 0 16 16" className={ico}><path d="M1.500 8c3-6 10-6 13 0-3 6-10 6-13 0z" /><circle cx="8" cy="8" r="2.300" /></svg></button>
        <StatusDivider />
        <button type="button" aria-label="Hand" className="ml-2 flex h-[27px] w-[23px] items-center justify-center rounded-[2px] bg-[#686868]">
          <svg viewBox="0 0 16 16" className="size-4 fill-none stroke-white" strokeWidth="1.200"><path d="M4.500 8V4a1 1 0 0 1 2 0V2.500a1 1 0 0 1 2 0V3a1 1 0 0 1 2 0V4.500a1 1 0 0 1 2 0V9.500c0 3-1.500 5-4.500 5-2.500 0-3.500-1.500-4.500-3.500L2 8.500c0-1.200 1.500-1.500 2.500-.5zM6.500 4v3M8.500 3v4M10.500 3.500V7" /></svg>
        </button>
        <button type="button" aria-label="Add region" className="mr-[9px] ml-[5px]"><svg viewBox="0 0 16 16" className={ico} strokeWidth="1.300"><path d="M7 14H3.500a1.500 1.500 0 0 1-1.500-1.500v-9A1.500 1.500 0 0 1 3.500 2h8A1.500 1.500 0 0 1 13 3.500V7M8.500 11.500H15M11.700 8.500V15" /></svg></button>
        <StatusDivider />
        <button type="button" aria-label="Two pages" className="ml-3"><svg viewBox="0 0 16 16" className={ico} strokeWidth="1.200"><path d="M2 2h5.500v12H2zM8.500 2H14v12H8.500zM3.500 5h2.500M3.500 8h2.500M3.500 11h2.500M10 5h2.500M10 8h2.500M10 11h2.500" /></svg></button>
        <button type="button" aria-label="Continuous" className="mr-[5px] ml-[5px] flex h-[27px] w-[23px] items-center justify-center rounded-[2px] bg-[#686868]">
          <svg viewBox="0 0 16 16" className="size-4 fill-none stroke-white" strokeWidth="1.200"><path d="M4 1v7.500h8V1M6 3.500h4M6 6h4M1.500 2v7.500M14.500 2v7.500M1.500 10.500h13M3.500 15v-2.500h9V15M1.500 13v2M14.500 13v2" /></svg>
        </button>
        <StatusDivider />
        <button type="button" aria-label="Zoom out" className="w-10 text-[14px] font-bold">-</button>
        <span className="w-7 text-center">58%</span>
        <button type="button" aria-label="Zoom in" className="w-[42px] text-[14px] font-bold">+</button>
      </div>
    </footer>
  );
}

export default function App() {
  return (
    <div className="relative flex h-screen flex-col overflow-hidden bg-[#333] font-['Noto_Sans','Noto_Sans_CJK_SC',sans-serif]">
      <TitleBar />
      <div className="flex h-16 shrink-0 bg-[#3d3d3d]">
        <ToolGroup tools={fileTools} />
        <ToolDivider />
        <ToolGroup tools={viewTools} />
        <ToolDivider />
        <ToolGroup tools={markupTools} />
        <ToolDivider />
        <ToolGroup tools={helperTools} />
      </div>
      <div className="flex h-[21px] shrink-0 items-stretch justify-between border-b border-[#999] bg-[#323232]">
        <div className="flex w-[200px] items-center bg-[#999] pt-[2px] pl-[14px] text-[12px] leading-4 text-white">
          Architectural Drawing-...
          <button type="button" aria-label="Close tab" className="ml-auto pr-[17px] pb-[2px]"><Chevron className="size-2" d="M1 1l10 10M11 1L1 11" /></button>
        </div>
        <button type="button" aria-label="Tab list" className="pt-1 pr-[2px] text-[#e0e0e0]"><Chevron className="size-4" d="M2 4l4 4.500 4-4.500" /></button>
      </div>

      <main className="relative flex min-h-0 grow">
        <aside className="flex w-[37px] shrink-0 flex-col items-center gap-[15px] border-r-[3px] border-[#434343] bg-[#313131] pt-[7px] text-[#e4e4e4]">
          <button type="button" aria-label="Bookmarks"><svg viewBox="0 0 18 20" className="h-5 w-[18px] fill-none stroke-current" strokeWidth="1.300"><path d="M1.500 1h15v18L9 14.500 1.500 19z" /></svg></button>
          <button type="button" aria-label="Thumbnails"><svg viewBox="0 0 20 20" className="size-[19px] fill-none stroke-current" strokeWidth="1.400"><rect x="1" y="1" width="8" height="8" rx="1.500" /><rect x="11.500" y="1" width="8" height="8" rx="1.500" /><rect x="1" y="11.500" width="8" height="8" rx="1.500" /><rect x="11.500" y="11.500" width="8" height="8" rx="1.500" /></svg></button>
          <button type="button" aria-label="Help"><svg viewBox="0 0 20 20" className="size-5 fill-none stroke-current" strokeWidth="1.300"><circle cx="10" cy="10" r="9.200" /><path d="M7.300 8a2.700 2.700 0 1 1 4.200 2.200c-1 .7-1.500 1.200-1.500 2.300M10 14v1.500" /></svg></button>
          <button type="button" aria-label="Outline" className="mt-auto mb-[13px]"><svg viewBox="0 0 20 18" className="h-[18px] w-5 fill-none stroke-current" strokeWidth="1.600"><path d="M0 2h2M4 2h16M0 9h2M4 9h16M0 16h2M4 16h16" /></svg></button>
        </aside>
        <div className="flex min-w-0 grow flex-col items-center gap-[6px] overflow-hidden pt-[10px] pr-px">
          <div className="w-[1080px] shrink-0"><Drawing /></div>
          <div className="h-1 w-[1080px] shrink-0 bg-white" />
        </div>
        <span className="absolute top-0 right-0 h-[298px] w-[10px] bg-[#999]" />
        <button type="button" aria-label="Expand panel" className="absolute top-[426px] right-0 flex h-[64px] w-[18px] items-center justify-center rounded-l bg-[#2e2e2e]">
          <svg viewBox="0 0 8 10" className="h-[10px] w-2 fill-[#c8c8c8]"><path d="M7 0v3L4 5l3 2v3L0 5z" /></svg>
        </button>
      </main>
      <StatusBar />
      <span className="absolute top-[981px] left-[920px] flex h-[31px] w-[65px] items-center justify-center rounded bg-black/50 text-[12px] text-[#c8c8c8]">1 / 4</span>

      <ConvertWindow />
      <div className="pointer-events-none absolute top-[245px] left-[767px] h-[531px] w-[944px] rounded-lg shadow-[0_16px_44px_rgba(0,0,0,0.45)]" />
      <OpenDialog />
      <GuideArrows />
    </div>
  );
}
